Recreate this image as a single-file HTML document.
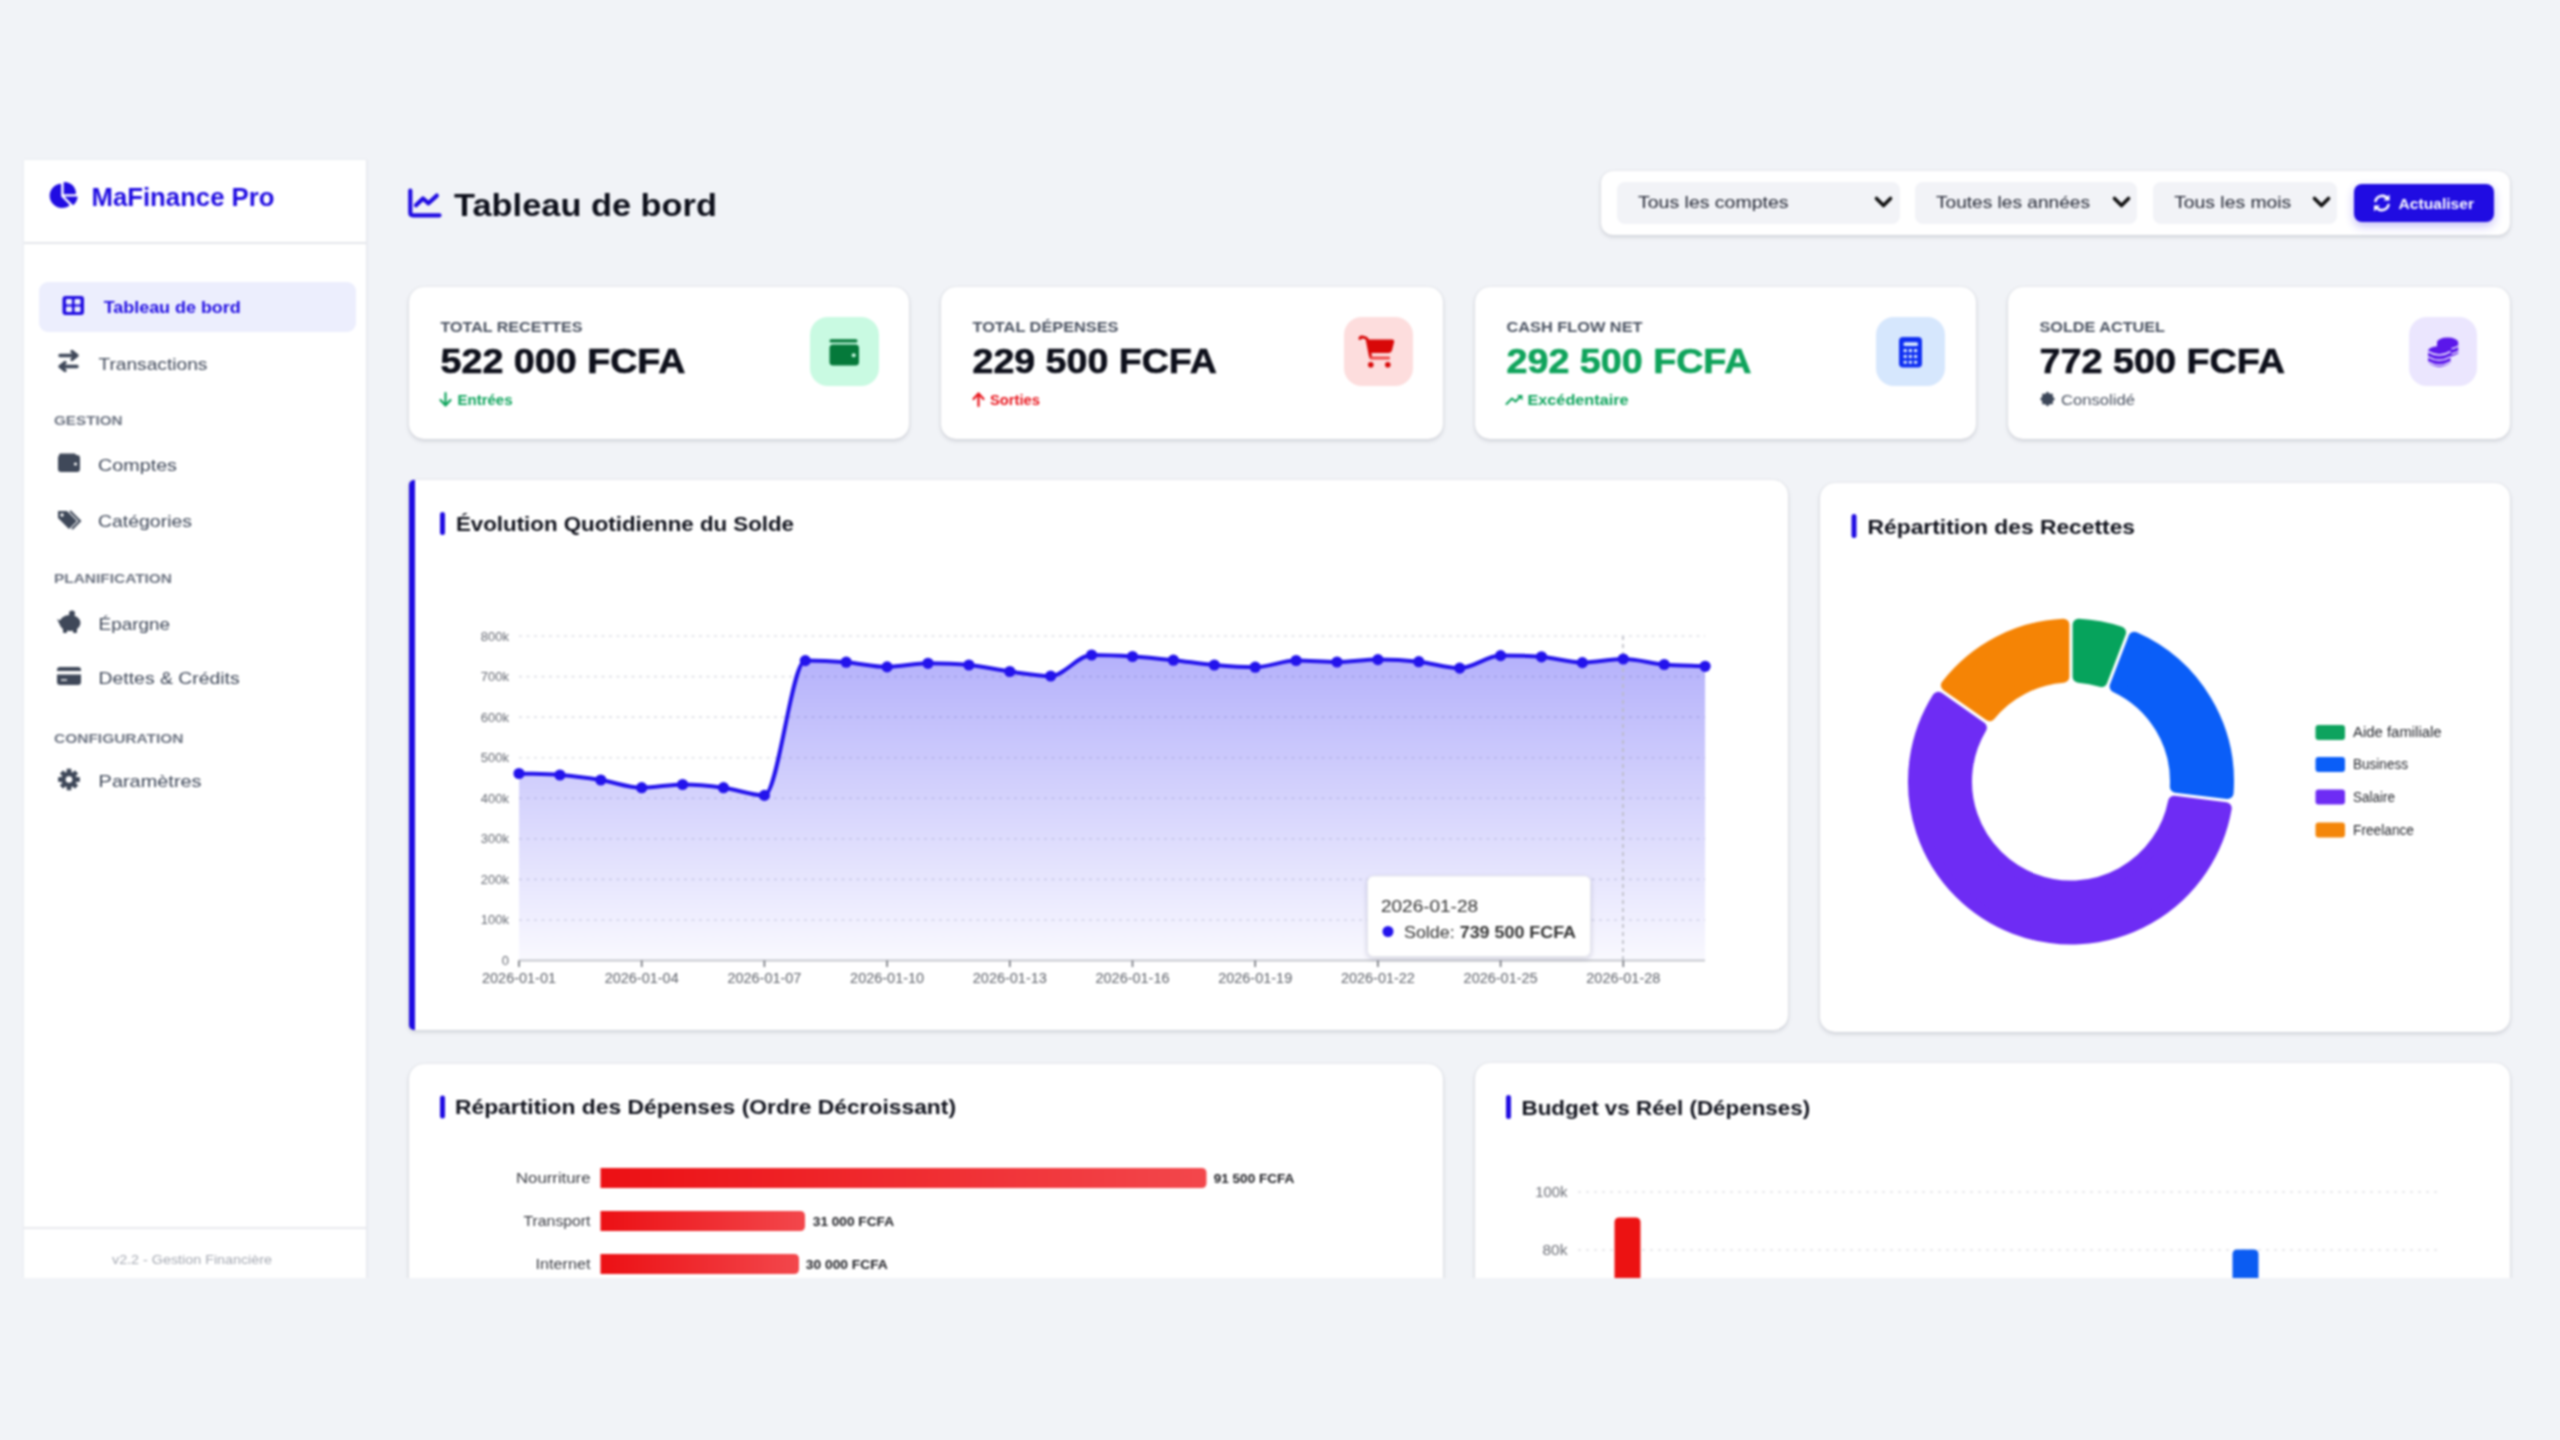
<!DOCTYPE html>
<html><head><meta charset="utf-8"><title>MaFinance Pro</title><style>
*{margin:0;padding:0;box-sizing:border-box}
html,body{width:2560px;height:1440px;overflow:hidden;background:#f1f3f7;font-family:"Liberation Sans",sans-serif}
.vp{position:absolute;left:0;top:0;width:2560px;height:1278px;overflow:hidden}
.abs{position:absolute}
.sb{position:absolute;left:24px;top:160px;width:343px;height:1118px;background:#fff;border-right:1.5px solid #e6e8ee;box-shadow:0 0 3px rgba(20,30,60,.06)}
.card{position:absolute;background:#fff;border-radius:15px;box-shadow:0 2px 4px rgba(20,25,45,.15),0 0 2px rgba(20,25,45,.10)}
svg.ov{position:absolute;left:0;top:0}
.wrap{position:absolute;left:0;top:0;width:2560px;height:1440px;background:#f1f3f7;filter:blur(0.8px)}
</style></head>
<body><div class="wrap"><div class="vp"><div class="sb"></div><div class="abs" style="left:24px;top:242px;width:342px;height:2px;background:#e4e6eb"></div><div class="abs" style="left:39px;top:282px;width:317px;height:50px;background:#eceefd;border-radius:9px"></div><div class="abs" style="left:24px;top:1227px;width:342px;height:2px;background:#e8e9ee"></div><div class="card" style="left:1601px;top:171px;width:909px;height:64px;border-radius:12px;box-shadow:0 2px 4px rgba(20,25,45,.15),0 0 2px rgba(20,25,45,.10)"></div><div class="abs" style="left:1617px;top:182px;width:283px;height:42px;background:#f2f3f7;border-radius:8px"></div><div class="abs" style="left:1915px;top:182px;width:222px;height:42px;background:#f2f3f7;border-radius:8px"></div><div class="abs" style="left:2153px;top:182px;width:184px;height:42px;background:#f2f3f7;border-radius:8px"></div><div class="abs" style="left:2354px;top:184px;width:140px;height:38px;background:#200ce2;border-radius:8px;box-shadow:0 4px 10px rgba(60,40,230,.30)"></div><div class="card" style="left:409px;top:287px;width:500px;height:152px;"></div><div class="abs" style="left:810px;top:317px;width:68.5px;height:68.5px;background:#c9fae2;border-radius:18px"></div><div class="card" style="left:941px;top:287px;width:502px;height:152px;"></div><div class="abs" style="left:1344px;top:317px;width:68.5px;height:68.5px;background:#fddddd;border-radius:18px"></div><div class="card" style="left:1475px;top:287px;width:501px;height:152px;"></div><div class="abs" style="left:1876px;top:317px;width:68.5px;height:68.5px;background:#d6e7fd;border-radius:18px"></div><div class="card" style="left:2008px;top:287px;width:502px;height:152px;"></div><div class="abs" style="left:2408.5px;top:317px;width:68.5px;height:68.5px;background:#ebe6fe;border-radius:18px"></div><div class="card" style="left:409px;top:480px;width:1379px;height:550px;border-left:6px solid #200ce2;border-radius:5px 15px 15px 5px"></div><div class="card" style="left:1820px;top:483px;width:690px;height:549px;"></div><div class="card" style="left:409px;top:1064px;width:1034px;height:336px;"></div><div class="card" style="left:1475px;top:1063px;width:1035px;height:337px;"></div></div>
<svg class="ov" width="2560" height="1440" viewBox="0 0 2560 1440" font-family="Liberation Sans, sans-serif">
<defs><linearGradient id="lg" x1="0" y1="636" x2="0" y2="960" gradientUnits="userSpaceOnUse"><stop offset="0" stop-color="#3b32f4" stop-opacity=".40"/><stop offset="1" stop-color="#3b32f4" stop-opacity=".03"/></linearGradient><linearGradient id="rg" x1="0" y1="0" x2="1" y2="0"><stop offset="0" stop-color="#ec1014"/><stop offset="1" stop-color="#f3474c"/></linearGradient><clipPath id="clipb"><rect x="0" y="0" width="2560" height="1278"/></clipPath><filter id="tsh" x="-20%" y="-30%" width="140%" height="160%"><feDropShadow dx="0" dy="2" stdDeviation="2.5" flood-color="#1e2846" flood-opacity=".18"/></filter></defs>
<path transform="translate(48,182) scale(0.05147,0.05078)" d="M304 240V16.6c0-9 7-16.6 16-16.6C443.7 0 544 100.3 544 224c0 9-7.6 16-16.6 16H304zM32 272C32 150.7 122.1 50.3 239 34.3c9.2-1.3 17 6.1 17 15.4V288L412.5 444.5c6.7 6.7 6.2 17.7-1.5 23.1C371.8 495.6 323.8 512 272 512C139.5 512 32 404.6 32 272zm526.4 16c9.3 0 16.6 7.8 15.4 17c-7.7 55.9-34.6 105.6-73.9 142.3c-6 5.6-15.4 5.2-21.2-.7L320 288H558.4z" fill="#200ce2"/>
<text x="91.5" y="206" font-size="25" font-weight="700" fill="#200ce2" text-anchor="start" textLength="183" lengthAdjust="spacingAndGlyphs" >MaFinance Pro</text>
<path d="M410.3 190.5 V212.5 Q410.3 215.3 413 215.3 H439.5" stroke="#200ce2" stroke-width="4.2" fill="none" stroke-linecap="round" stroke-linejoin="round"/>
<path d="M416 205.3 L423 198.5 L428.5 203.3 L436.8 195.6" stroke="#200ce2" stroke-width="4.2" fill="none" stroke-linecap="round" stroke-linejoin="round"/>
<text x="454" y="216" font-size="32" font-weight="700" fill="#0d0f1a" text-anchor="start" textLength="263" lengthAdjust="spacingAndGlyphs" >Tableau de bord</text>
<rect x="62.5" y="296" width="21.5" height="19" rx="3" fill="#200ce2"/>
<rect x="66" y="299" width="6" height="5.5" rx="1" fill="#eceefd"/>
<rect x="74.5" y="299" width="6" height="5.5" rx="1" fill="#eceefd"/>
<rect x="66" y="306.5" width="6" height="5.5" rx="1" fill="#eceefd"/>
<rect x="74.5" y="306.5" width="6" height="5.5" rx="1" fill="#eceefd"/>
<text x="103.7" y="313" font-size="17" font-weight="700" fill="#200ce2" text-anchor="start" textLength="137" lengthAdjust="spacingAndGlyphs" >Tableau de bord</text>
<g stroke="#3f4859" stroke-width="3.4" fill="none" stroke-linecap="round" stroke-linejoin="round"><path d="M60 355.5 H77 M72 351.5 L77 355.5 L72 359.5"/><path d="M77 366.5 H60 M65 362.5 L60 366.5 L65 370.5"/></g>
<text x="98.4" y="369.6" font-size="17" font-weight="400" fill="#3f4859" text-anchor="start" textLength="109" lengthAdjust="spacingAndGlyphs" >Transactions</text>
<text x="54" y="425.4" font-size="13" font-weight="700" fill="#6b7280" text-anchor="start" textLength="68.5" lengthAdjust="spacingAndGlyphs" >GESTION</text>
<rect x="58" y="455" width="22" height="17" rx="3" fill="#3f4859"/><rect x="59" y="453.5" width="17" height="3" rx="1.5" fill="#3f4859"/><circle cx="75.5" cy="464" r="1.6" fill="#fff"/>
<text x="98" y="471" font-size="17" font-weight="400" fill="#3f4859" text-anchor="start" textLength="79" lengthAdjust="spacingAndGlyphs" >Comptes</text>
<path d="M58 511 H67 L77 521 L69 529 L58 518 Z" fill="#3f4859"/><path d="M70 511 L80 521 L72 529" stroke="#3f4859" stroke-width="2" fill="none"/><circle cx="62" cy="515" r="1.7" fill="#fff"/>
<text x="98" y="527" font-size="17" font-weight="400" fill="#3f4859" text-anchor="start" textLength="94" lengthAdjust="spacingAndGlyphs" >Catégories</text>
<text x="54" y="583" font-size="13" font-weight="700" fill="#6b7280" text-anchor="start" textLength="118" lengthAdjust="spacingAndGlyphs" >PLANIFICATION</text>
<ellipse cx="70" cy="623" rx="10.5" ry="8" fill="#3f4859"/><rect x="63" y="626" width="4" height="7" rx="1" fill="#3f4859"/><rect x="73" y="626" width="4" height="7" rx="1" fill="#3f4859"/><path d="M57 619 L61 621 L60 625 Z" fill="#3f4859"/><circle cx="72" cy="613.5" r="3" fill="#3f4859"/>
<text x="98.6" y="630" font-size="17" font-weight="400" fill="#3f4859" text-anchor="start" textLength="71.5" lengthAdjust="spacingAndGlyphs" >Épargne</text>
<rect x="57" y="667" width="24" height="18" rx="3" fill="#3f4859"/><rect x="57" y="671" width="24" height="3.5" fill="#fff"/><rect x="61" y="679" width="6" height="2" fill="#fff" opacity=".7"/>
<text x="98.6" y="684" font-size="17" font-weight="400" fill="#3f4859" text-anchor="start" textLength="141" lengthAdjust="spacingAndGlyphs" >Dettes &amp; Crédits</text>
<text x="54" y="742.5" font-size="13" font-weight="700" fill="#6b7280" text-anchor="start" textLength="129.5" lengthAdjust="spacingAndGlyphs" >CONFIGURATION</text>
<path d="M79.31 777.50 L79.31 781.50 L76.29 781.25 L75.39 783.42 L77.70 785.37 L74.87 788.20 L72.92 785.89 L70.75 786.79 L71.00 789.81 L67.00 789.81 L67.25 786.79 L65.08 785.89 L63.13 788.20 L60.30 785.37 L62.61 783.42 L61.71 781.25 L58.69 781.50 L58.69 777.50 L61.71 777.75 L62.61 775.58 L60.30 773.63 L63.13 770.80 L65.08 773.11 L67.25 772.21 L67.00 769.19 L71.00 769.19 L70.75 772.21 L72.92 773.11 L74.87 770.80 L77.70 773.63 L75.39 775.58 L76.29 777.75Z" fill="#3f4859" stroke="#3f4859" stroke-width="1" stroke-linejoin="round"/><circle cx="69" cy="779.5" r="3.3" fill="#fff"/>
<text x="98.6" y="787" font-size="17" font-weight="400" fill="#3f4859" text-anchor="start" textLength="103" lengthAdjust="spacingAndGlyphs" >Paramètres</text>
<text x="112" y="1264" font-size="13" font-weight="400" fill="#a5a9b2" text-anchor="start" textLength="160" lengthAdjust="spacingAndGlyphs" >v2.2 - Gestion Financière</text>
<text x="1638" y="208" font-size="16.5" font-weight="400" fill="#1f2330" text-anchor="start" textLength="150.5" lengthAdjust="spacingAndGlyphs" >Tous les comptes</text>
<path d="M1876.5 198.5 L1883.5 205.5 L1890.5 198.5" stroke="#111" stroke-width="3.6" fill="none" stroke-linecap="round" stroke-linejoin="round"/>
<text x="1936" y="208" font-size="16.5" font-weight="400" fill="#1f2330" text-anchor="start" textLength="154" lengthAdjust="spacingAndGlyphs" >Toutes les années</text>
<path d="M2114.5 198.5 L2121.5 205.5 L2128.5 198.5" stroke="#111" stroke-width="3.6" fill="none" stroke-linecap="round" stroke-linejoin="round"/>
<text x="2174.2" y="208" font-size="16.5" font-weight="400" fill="#1f2330" text-anchor="start" textLength="117" lengthAdjust="spacingAndGlyphs" >Tous les mois</text>
<path d="M2314.5 198.5 L2321.5 205.5 L2328.5 198.5" stroke="#111" stroke-width="3.6" fill="none" stroke-linecap="round" stroke-linejoin="round"/>
<g stroke="#fff" stroke-width="2.6" fill="none" stroke-linecap="round"><path d="M2375.5 201 A7 7 0 0 1 2388 199"/><path d="M2388.5 205 A7 7 0 0 1 2376 207"/></g><path d="M2389.5 194.5 V200.5 H2383.5 Z" fill="#fff"/><path d="M2374 211.5 V205.5 H2380 Z" fill="#fff"/>
<text x="2398.5" y="208.5" font-size="15.5" font-weight="700" fill="#fff" text-anchor="start" textLength="75.5" lengthAdjust="spacingAndGlyphs" >Actualiser</text>
<text x="440.5" y="331.5" font-size="14.5" font-weight="700" fill="#4a5261" text-anchor="start" textLength="142" lengthAdjust="spacingAndGlyphs" >TOTAL RECETTES</text>
<text x="440.5" y="373.3" font-size="35" font-weight="700" fill="#0d0f1a" text-anchor="start" textLength="245" lengthAdjust="spacingAndGlyphs" stroke="#0d0f1a" stroke-width="0.6">522 000 FCFA</text>
<text x="972.5" y="331.5" font-size="14.5" font-weight="700" fill="#4a5261" text-anchor="start" textLength="146" lengthAdjust="spacingAndGlyphs" >TOTAL DÉPENSES</text>
<text x="972.5" y="373.3" font-size="35" font-weight="700" fill="#0d0f1a" text-anchor="start" textLength="244.3" lengthAdjust="spacingAndGlyphs" stroke="#0d0f1a" stroke-width="0.6">229 500 FCFA</text>
<text x="1506.5" y="331.5" font-size="14.5" font-weight="700" fill="#4a5261" text-anchor="start" textLength="136" lengthAdjust="spacingAndGlyphs" >CASH FLOW NET</text>
<text x="1506.5" y="373.3" font-size="35" font-weight="700" fill="#0fa35b" text-anchor="start" textLength="245" lengthAdjust="spacingAndGlyphs" stroke="#0fa35b" stroke-width="0.6">292 500 FCFA</text>
<text x="2039.5" y="331.5" font-size="14.5" font-weight="700" fill="#4a5261" text-anchor="start" textLength="125.5" lengthAdjust="spacingAndGlyphs" >SOLDE ACTUEL</text>
<text x="2039.5" y="373.3" font-size="35" font-weight="700" fill="#0d0f1a" text-anchor="start" textLength="245.6" lengthAdjust="spacingAndGlyphs" stroke="#0d0f1a" stroke-width="0.6">772 500 FCFA</text>
<path d="M445.5 393 V405 M440.5 400 L445.5 405.5 L450.5 400" stroke="#0ea45c" stroke-width="2.2" fill="none" stroke-linecap="round" stroke-linejoin="round"/>
<text x="457.5" y="405.4" font-size="14.5" font-weight="700" fill="#0ea45c" text-anchor="start" textLength="55" lengthAdjust="spacingAndGlyphs" >Entrées</text>
<path d="M978.5 406 V394 M973.5 399 L978.5 393.5 L983.5 399" stroke="#e8141c" stroke-width="2.2" fill="none" stroke-linecap="round" stroke-linejoin="round"/>
<text x="990" y="405.4" font-size="14.5" font-weight="700" fill="#e8141c" text-anchor="start" textLength="50" lengthAdjust="spacingAndGlyphs" >Sorties</text>
<path d="M1506.5 404 L1512 398.5 L1515.5 401.5 L1521 396" stroke="#0ea45c" stroke-width="2" fill="none" stroke-linecap="round" stroke-linejoin="round"/><path d="M1517 395 H1522.5 V400.5 Z" fill="#0ea45c"/>
<text x="1527.5" y="405.4" font-size="14.5" font-weight="700" fill="#0ea45c" text-anchor="start" textLength="101" lengthAdjust="spacingAndGlyphs" >Excédentaire</text>
<path d="M2055.00 399.00 L2052.86 401.22 L2052.80 404.30 L2049.72 404.36 L2047.50 406.50 L2045.28 404.36 L2042.20 404.30 L2042.14 401.22 L2040.00 399.00 L2042.14 396.78 L2042.20 393.70 L2045.28 393.64 L2047.50 391.50 L2049.72 393.64 L2052.80 393.70 L2052.86 396.78Z" fill="#3d4759"/>
<text x="2061" y="405.4" font-size="14.5" font-weight="400" fill="#4a5261" text-anchor="start" textLength="74" lengthAdjust="spacingAndGlyphs" >Consolidé</text>
<rect x="829.5" y="339.3" width="28" height="3.2" rx="1.6" fill="#05793a"/><rect x="829.5" y="344.5" width="29.5" height="21" rx="3.5" fill="#05793a"/><circle cx="853.7" cy="355.3" r="2" fill="#c9fae2"/>
<path d="M1360 338.6 Q1360 336.8 1362 337 L1365 337.6 Q1366.8 338 1367.2 339.5 L1370.5 356.5" stroke="#d80808" stroke-width="3" fill="none" stroke-linecap="round" stroke-linejoin="round"/><path d="M1366.5 339.5 H1391.8 Q1394.8 339.5 1394 342.5 L1392 350.3 Q1391.2 353 1388.3 353 H1369 Z" fill="#d80808"/><rect x="1369.5" y="356.6" width="20.5" height="2.8" rx="1" fill="#ef4a4a"/><circle cx="1370.8" cy="364.8" r="2.8" fill="#d80808"/><circle cx="1387.8" cy="364.8" r="2.8" fill="#d80808"/>
<rect x="1899" y="337" width="23" height="30.6" rx="4" fill="#0f2ff2"/><rect x="1903.5" y="342.3" width="14.5" height="3.6" rx="1.5" fill="#d6e7fd"/>
<rect x="1903.6" y="349.1" width="3.2" height="3.1" rx=".8" fill="#d6e7fd"/>
<rect x="1908.8" y="349.1" width="3.2" height="3.1" rx=".8" fill="#d6e7fd"/>
<rect x="1914.0" y="349.1" width="3.2" height="3.1" rx=".8" fill="#d6e7fd"/>
<rect x="1903.6" y="354.9" width="3.2" height="3.1" rx=".8" fill="#d6e7fd"/>
<rect x="1908.8" y="354.9" width="3.2" height="3.1" rx=".8" fill="#d6e7fd"/>
<rect x="1914.0" y="354.9" width="3.2" height="3.1" rx=".8" fill="#d6e7fd"/>
<rect x="1903.6" y="360.7" width="3.2" height="3.1" rx=".8" fill="#d6e7fd"/>
<rect x="1908.8" y="360.7" width="3.2" height="3.1" rx=".8" fill="#d6e7fd"/>
<rect x="1914.0" y="360.7" width="3.2" height="3.1" rx=".8" fill="#d6e7fd"/>
<g fill="#5b17ea"><ellipse cx="2447.6" cy="342" rx="10.6" ry="4.4"/><path d="M2437 342 V353.5 Q2447.6 360 2458.2 353.5 V342 Z"/><ellipse cx="2439.3" cy="350.8" rx="11.2" ry="4.5"/><path d="M2428.1 350.8 V362.8 Q2439.3 371 2450.5 362.8 V350.8 Z"/></g><g stroke="#ebe6fe" stroke-width="1.5" fill="none"><path d="M2428.1 351.5 Q2439.3 358.5 2450.5 351.5"/><path d="M2428.1 356.8 Q2439.3 363.5 2450.5 356.8"/><path d="M2428.1 361.8 Q2439.3 368.5 2450.5 361.8"/><path d="M2451.5 348.8 Q2455.5 348 2458.2 346.2"/><path d="M2451.5 354 Q2455.5 353.2 2458.2 351.4"/></g>
<rect x="440" y="512" width="5" height="23" rx="2.5" fill="#200ce2"/>
<text x="456" y="531" font-size="20.5" font-weight="700" fill="#10121c" text-anchor="start" textLength="338" lengthAdjust="spacingAndGlyphs" >Évolution Quotidienne du Solde</text>
<rect x="1851.5" y="514" width="5" height="24" rx="2.5" fill="#200ce2"/>
<text x="1867.6" y="533.6" font-size="20.5" font-weight="700" fill="#10121c" text-anchor="start" textLength="267.4" lengthAdjust="spacingAndGlyphs" >Répartition des Recettes</text>
<rect x="440" y="1095.5" width="5" height="23.0" rx="2.5" fill="#200ce2"/>
<text x="455" y="1114.2" font-size="20.5" font-weight="700" fill="#10121c" text-anchor="start" textLength="501" lengthAdjust="spacingAndGlyphs" >Répartition des Dépenses (Ordre Décroissant)</text>
<rect x="1506" y="1095" width="5" height="24" rx="2.5" fill="#200ce2"/>
<text x="1521.5" y="1114.5" font-size="20.5" font-weight="700" fill="#10121c" text-anchor="start" textLength="288.7" lengthAdjust="spacingAndGlyphs" >Budget vs Réel (Dépenses)</text>
<text x="509" y="965.0" font-size="13" font-weight="400" fill="#666a73" text-anchor="end" >0</text>
<line x1="519" y1="919.94" x2="1705" y2="919.94" stroke="#e0e1e7" stroke-width="1.6" stroke-dasharray="3 4.5"/>
<text x="509" y="924.44" font-size="13" font-weight="400" fill="#666a73" text-anchor="end" >100k</text>
<line x1="519" y1="879.38" x2="1705" y2="879.38" stroke="#e0e1e7" stroke-width="1.6" stroke-dasharray="3 4.5"/>
<text x="509" y="883.88" font-size="13" font-weight="400" fill="#666a73" text-anchor="end" >200k</text>
<line x1="519" y1="838.82" x2="1705" y2="838.82" stroke="#e0e1e7" stroke-width="1.6" stroke-dasharray="3 4.5"/>
<text x="509" y="843.3199999999999" font-size="13" font-weight="400" fill="#666a73" text-anchor="end" >300k</text>
<line x1="519" y1="798.26" x2="1705" y2="798.26" stroke="#e0e1e7" stroke-width="1.6" stroke-dasharray="3 4.5"/>
<text x="509" y="802.76" font-size="13" font-weight="400" fill="#666a73" text-anchor="end" >400k</text>
<line x1="519" y1="757.70" x2="1705" y2="757.70" stroke="#e0e1e7" stroke-width="1.6" stroke-dasharray="3 4.5"/>
<text x="509" y="762.2" font-size="13" font-weight="400" fill="#666a73" text-anchor="end" >500k</text>
<line x1="519" y1="717.14" x2="1705" y2="717.14" stroke="#e0e1e7" stroke-width="1.6" stroke-dasharray="3 4.5"/>
<text x="509" y="721.64" font-size="13" font-weight="400" fill="#666a73" text-anchor="end" >600k</text>
<line x1="519" y1="676.58" x2="1705" y2="676.58" stroke="#e0e1e7" stroke-width="1.6" stroke-dasharray="3 4.5"/>
<text x="509" y="681.0799999999999" font-size="13" font-weight="400" fill="#666a73" text-anchor="end" >700k</text>
<line x1="519" y1="636.02" x2="1705" y2="636.02" stroke="#e0e1e7" stroke-width="1.6" stroke-dasharray="3 4.5"/>
<text x="509" y="640.52" font-size="13" font-weight="400" fill="#666a73" text-anchor="end" >800k</text>
<path d="M519.00 773.50 C532.63 774.00 546.27 773.92 559.90 775.00 C573.53 776.08 587.17 777.88 600.80 780.00 C614.43 782.12 628.07 787.70 641.70 787.70 C655.33 787.70 668.97 784.50 682.60 784.50 C696.23 784.50 709.87 785.88 723.50 787.70 C737.13 789.52 750.77 795.40 764.40 795.40 C778.03 795.40 791.67 660.60 805.30 660.60 C818.93 660.60 832.57 661.15 846.20 662.20 C859.83 663.25 873.47 666.90 887.10 666.90 C900.73 666.90 914.37 663.30 928.00 663.30 C941.63 663.30 955.27 663.63 968.90 665.00 C982.53 666.37 996.17 669.67 1009.80 671.50 C1023.43 673.33 1037.07 676.00 1050.70 676.00 C1064.33 676.00 1077.97 655.00 1091.60 655.00 C1105.23 655.00 1118.87 655.63 1132.50 656.50 C1146.13 657.37 1159.77 658.78 1173.40 660.20 C1187.03 661.62 1200.67 663.83 1214.30 665.00 C1227.93 666.17 1241.57 667.20 1255.20 667.20 C1268.83 667.20 1282.47 660.50 1296.10 660.50 C1309.73 660.50 1323.37 662.00 1337.00 662.00 C1350.63 662.00 1364.27 659.60 1377.90 659.60 C1391.53 659.60 1405.17 660.28 1418.80 661.70 C1432.43 663.12 1446.07 668.10 1459.70 668.10 C1473.33 668.10 1486.97 655.60 1500.60 655.60 C1514.23 655.60 1527.87 655.63 1541.50 656.80 C1555.13 657.97 1568.77 662.60 1582.40 662.60 C1596.03 662.60 1609.67 659.00 1623.30 659.00 C1636.93 659.00 1650.57 663.28 1664.20 664.50 C1677.83 665.72 1691.47 665.70 1705.10 666.30 L1705.10 960.5 L519.00 960.5 Z" fill="url(#lg)"/>
<line x1="519" y1="960.5" x2="1705" y2="960.5" stroke="#c5c7cd" stroke-width="2"/>
<line x1="519.00" y1="960.5" x2="519.00" y2="967.0" stroke="#6e7179" stroke-width="1.6"/>
<text x="519.0" y="983" font-size="14" font-weight="400" fill="#5d6169" text-anchor="middle" textLength="74" lengthAdjust="spacingAndGlyphs" >2026-01-01</text>
<line x1="641.70" y1="960.5" x2="641.70" y2="967.0" stroke="#6e7179" stroke-width="1.6"/>
<text x="641.7" y="983" font-size="14" font-weight="400" fill="#5d6169" text-anchor="middle" textLength="74" lengthAdjust="spacingAndGlyphs" >2026-01-04</text>
<line x1="764.40" y1="960.5" x2="764.40" y2="967.0" stroke="#6e7179" stroke-width="1.6"/>
<text x="764.4" y="983" font-size="14" font-weight="400" fill="#5d6169" text-anchor="middle" textLength="74" lengthAdjust="spacingAndGlyphs" >2026-01-07</text>
<line x1="887.10" y1="960.5" x2="887.10" y2="967.0" stroke="#6e7179" stroke-width="1.6"/>
<text x="887.0999999999999" y="983" font-size="14" font-weight="400" fill="#5d6169" text-anchor="middle" textLength="74" lengthAdjust="spacingAndGlyphs" >2026-01-10</text>
<line x1="1009.80" y1="960.5" x2="1009.80" y2="967.0" stroke="#6e7179" stroke-width="1.6"/>
<text x="1009.8" y="983" font-size="14" font-weight="400" fill="#5d6169" text-anchor="middle" textLength="74" lengthAdjust="spacingAndGlyphs" >2026-01-13</text>
<line x1="1132.50" y1="960.5" x2="1132.50" y2="967.0" stroke="#6e7179" stroke-width="1.6"/>
<text x="1132.5" y="983" font-size="14" font-weight="400" fill="#5d6169" text-anchor="middle" textLength="74" lengthAdjust="spacingAndGlyphs" >2026-01-16</text>
<line x1="1255.20" y1="960.5" x2="1255.20" y2="967.0" stroke="#6e7179" stroke-width="1.6"/>
<text x="1255.1999999999998" y="983" font-size="14" font-weight="400" fill="#5d6169" text-anchor="middle" textLength="74" lengthAdjust="spacingAndGlyphs" >2026-01-19</text>
<line x1="1377.90" y1="960.5" x2="1377.90" y2="967.0" stroke="#6e7179" stroke-width="1.6"/>
<text x="1377.9" y="983" font-size="14" font-weight="400" fill="#5d6169" text-anchor="middle" textLength="74" lengthAdjust="spacingAndGlyphs" >2026-01-22</text>
<line x1="1500.60" y1="960.5" x2="1500.60" y2="967.0" stroke="#6e7179" stroke-width="1.6"/>
<text x="1500.6" y="983" font-size="14" font-weight="400" fill="#5d6169" text-anchor="middle" textLength="74" lengthAdjust="spacingAndGlyphs" >2026-01-25</text>
<line x1="1623.30" y1="960.5" x2="1623.30" y2="967.0" stroke="#6e7179" stroke-width="1.6"/>
<text x="1623.3" y="983" font-size="14" font-weight="400" fill="#5d6169" text-anchor="middle" textLength="74" lengthAdjust="spacingAndGlyphs" >2026-01-28</text>
<line x1="1623" y1="636" x2="1623" y2="960.5" stroke="#b8bac2" stroke-width="1.6" stroke-dasharray="4 4"/>
<path d="M519.00 773.50 C532.63 774.00 546.27 773.92 559.90 775.00 C573.53 776.08 587.17 777.88 600.80 780.00 C614.43 782.12 628.07 787.70 641.70 787.70 C655.33 787.70 668.97 784.50 682.60 784.50 C696.23 784.50 709.87 785.88 723.50 787.70 C737.13 789.52 750.77 795.40 764.40 795.40 C778.03 795.40 791.67 660.60 805.30 660.60 C818.93 660.60 832.57 661.15 846.20 662.20 C859.83 663.25 873.47 666.90 887.10 666.90 C900.73 666.90 914.37 663.30 928.00 663.30 C941.63 663.30 955.27 663.63 968.90 665.00 C982.53 666.37 996.17 669.67 1009.80 671.50 C1023.43 673.33 1037.07 676.00 1050.70 676.00 C1064.33 676.00 1077.97 655.00 1091.60 655.00 C1105.23 655.00 1118.87 655.63 1132.50 656.50 C1146.13 657.37 1159.77 658.78 1173.40 660.20 C1187.03 661.62 1200.67 663.83 1214.30 665.00 C1227.93 666.17 1241.57 667.20 1255.20 667.20 C1268.83 667.20 1282.47 660.50 1296.10 660.50 C1309.73 660.50 1323.37 662.00 1337.00 662.00 C1350.63 662.00 1364.27 659.60 1377.90 659.60 C1391.53 659.60 1405.17 660.28 1418.80 661.70 C1432.43 663.12 1446.07 668.10 1459.70 668.10 C1473.33 668.10 1486.97 655.60 1500.60 655.60 C1514.23 655.60 1527.87 655.63 1541.50 656.80 C1555.13 657.97 1568.77 662.60 1582.40 662.60 C1596.03 662.60 1609.67 659.00 1623.30 659.00 C1636.93 659.00 1650.57 663.28 1664.20 664.50 C1677.83 665.72 1691.47 665.70 1705.10 666.30" stroke="#2313ec" stroke-width="4" fill="none" stroke-linejoin="round"/>
<circle cx="519.00" cy="773.50" r="5.6" fill="#2313ec"/>
<circle cx="559.90" cy="775.00" r="5.6" fill="#2313ec"/>
<circle cx="600.80" cy="780.00" r="5.6" fill="#2313ec"/>
<circle cx="641.70" cy="787.70" r="5.6" fill="#2313ec"/>
<circle cx="682.60" cy="784.50" r="5.6" fill="#2313ec"/>
<circle cx="723.50" cy="787.70" r="5.6" fill="#2313ec"/>
<circle cx="764.40" cy="795.40" r="5.6" fill="#2313ec"/>
<circle cx="805.30" cy="660.60" r="5.6" fill="#2313ec"/>
<circle cx="846.20" cy="662.20" r="5.6" fill="#2313ec"/>
<circle cx="887.10" cy="666.90" r="5.6" fill="#2313ec"/>
<circle cx="928.00" cy="663.30" r="5.6" fill="#2313ec"/>
<circle cx="968.90" cy="665.00" r="5.6" fill="#2313ec"/>
<circle cx="1009.80" cy="671.50" r="5.6" fill="#2313ec"/>
<circle cx="1050.70" cy="676.00" r="5.6" fill="#2313ec"/>
<circle cx="1091.60" cy="655.00" r="5.6" fill="#2313ec"/>
<circle cx="1132.50" cy="656.50" r="5.6" fill="#2313ec"/>
<circle cx="1173.40" cy="660.20" r="5.6" fill="#2313ec"/>
<circle cx="1214.30" cy="665.00" r="5.6" fill="#2313ec"/>
<circle cx="1255.20" cy="667.20" r="5.6" fill="#2313ec"/>
<circle cx="1296.10" cy="660.50" r="5.6" fill="#2313ec"/>
<circle cx="1337.00" cy="662.00" r="5.6" fill="#2313ec"/>
<circle cx="1377.90" cy="659.60" r="5.6" fill="#2313ec"/>
<circle cx="1418.80" cy="661.70" r="5.6" fill="#2313ec"/>
<circle cx="1459.70" cy="668.10" r="5.6" fill="#2313ec"/>
<circle cx="1500.60" cy="655.60" r="5.6" fill="#2313ec"/>
<circle cx="1541.50" cy="656.80" r="5.6" fill="#2313ec"/>
<circle cx="1582.40" cy="662.60" r="5.6" fill="#2313ec"/>
<circle cx="1623.30" cy="659.00" r="5.6" fill="#2313ec"/>
<circle cx="1664.20" cy="664.50" r="5.6" fill="#2313ec"/>
<circle cx="1705.10" cy="666.30" r="5.6" fill="#2313ec"/>
<rect x="1367.5" y="876" width="223" height="80.5" rx="6" fill="#fff" stroke="#e4e5ec" stroke-width="1" filter="url(#tsh)"/>
<text x="1381" y="911.5" font-size="17" font-weight="400" fill="#333" text-anchor="start" textLength="97" lengthAdjust="spacingAndGlyphs" >2026-01-28</text>
<circle cx="1388" cy="931.5" r="5.5" fill="#2313ec"/>
<text x="1404" y="937.6" font-size="17" fill="#333" textLength="172" lengthAdjust="spacingAndGlyphs">Solde: <tspan font-weight="700">739 500 FCFA</tspan></text>
<path d="M2078.60 624.68 A157 157 0 0 1 2120.11 632.38 L2101.44 681.01 A105 105 0 0 0 2078.59 676.77 Z" fill="#06a35c" stroke="#06a35c" stroke-width="12" stroke-linejoin="round"/>
<path d="M2134.29 637.82 A157 157 0 0 1 2227.57 793.07 L2175.87 786.73 A105 105 0 0 0 2115.62 686.45 Z" fill="#0a5ef8" stroke="#0a5ef8" stroke-width="12" stroke-linejoin="round"/>
<path d="M2225.72 808.15 A157 157 0 1 1 1938.19 697.78 L1980.86 727.65 A105 105 0 1 0 2174.02 801.80 Z" fill="#6e2cf4" stroke="#6e2cf4" stroke-width="12" stroke-linejoin="round"/>
<path d="M1946.90 685.33 A157 157 0 0 1 2063.40 624.68 L2063.41 676.77 A105 105 0 0 0 1989.57 715.21 Z" fill="#f58405" stroke="#f58405" stroke-width="12" stroke-linejoin="round"/>
<rect x="2315.5" y="725" width="29.5" height="15" rx="3" fill="#0ea35e"/>
<text x="2353" y="737" font-size="14" font-weight="400" fill="#25272d" text-anchor="start" textLength="88.6" lengthAdjust="spacingAndGlyphs" >Aide familiale</text>
<rect x="2315.5" y="757" width="29.5" height="15" rx="3" fill="#0a5ef8"/>
<text x="2353" y="769" font-size="14" font-weight="400" fill="#25272d" text-anchor="start" textLength="55" lengthAdjust="spacingAndGlyphs" >Business</text>
<rect x="2315.5" y="789.5" width="29.5" height="15" rx="3" fill="#6e2cf4"/>
<text x="2353" y="801.5" font-size="14" font-weight="400" fill="#25272d" text-anchor="start" textLength="42" lengthAdjust="spacingAndGlyphs" >Salaire</text>
<rect x="2315.5" y="822.5" width="29.5" height="15" rx="3" fill="#f4860a"/>
<text x="2353" y="834.5" font-size="14" font-weight="400" fill="#25272d" text-anchor="start" textLength="61" lengthAdjust="spacingAndGlyphs" >Freelance</text>
<g clip-path="url(#clipb)">
<path d="M600.5 1168 H1201.5 Q1206.5 1168 1206.5 1173 V1183 Q1206.5 1188 1201.5 1188 H600.5 Z" fill="url(#rg)"/>
<text x="590.5" y="1182.5" font-size="14.5" font-weight="400" fill="#3c3e45" text-anchor="end" textLength="74.5" lengthAdjust="spacingAndGlyphs" >Nourriture</text>
<text x="1213.7" y="1182.5" font-size="12.5" font-weight="700" fill="#1c1d22" text-anchor="start" textLength="80.7" lengthAdjust="spacingAndGlyphs" >91 500 FCFA</text>
<path d="M600.5 1211 H800.0 Q805.0 1211 805.0 1216 V1226 Q805.0 1231 800.0 1231 H600.5 Z" fill="url(#rg)"/>
<text x="590.5" y="1225.5" font-size="14.5" font-weight="400" fill="#3c3e45" text-anchor="end" textLength="67" lengthAdjust="spacingAndGlyphs" >Transport</text>
<text x="812.8" y="1225.5" font-size="12.5" font-weight="700" fill="#1c1d22" text-anchor="start" textLength="81.2" lengthAdjust="spacingAndGlyphs" >31 000 FCFA</text>
<path d="M600.5 1254 H794.0 Q799.0 1254 799.0 1259 V1269 Q799.0 1274 794.0 1274 H600.5 Z" fill="url(#rg)"/>
<text x="590.5" y="1268.5" font-size="14.5" font-weight="400" fill="#3c3e45" text-anchor="end" textLength="55" lengthAdjust="spacingAndGlyphs" >Internet</text>
<text x="805.8" y="1268.5" font-size="12.5" font-weight="700" fill="#1c1d22" text-anchor="start" textLength="82" lengthAdjust="spacingAndGlyphs" >30 000 FCFA</text>
<line x1="1578" y1="1192" x2="2438" y2="1192" stroke="#e3e4e8" stroke-width="1.5" stroke-dasharray="3 5"/>
<text x="1567.4" y="1197" font-size="14.5" font-weight="400" fill="#6b6e76" text-anchor="end" textLength="32.2" lengthAdjust="spacingAndGlyphs" >100k</text>
<line x1="1578" y1="1250" x2="2438" y2="1250" stroke="#e3e4e8" stroke-width="1.5" stroke-dasharray="3 5"/>
<text x="1567.4" y="1255" font-size="14.5" font-weight="400" fill="#6b6e76" text-anchor="end" textLength="25" lengthAdjust="spacingAndGlyphs" >80k</text>
<path d="M1614.5 1300 V1222.5 Q1614.5 1217.5 1619.5 1217.5 H1635.5 Q1640.5 1217.5 1640.5 1222.5 V1300 Z" fill="#ec1212"/>
<path d="M2232.5 1300 V1254.5 Q2232.5 1249.5 2237.5 1249.5 H2253.5 Q2258.5 1249.5 2258.5 1254.5 V1300 Z" fill="#0b5cf2"/>
</g>
</svg></div></body></html>
